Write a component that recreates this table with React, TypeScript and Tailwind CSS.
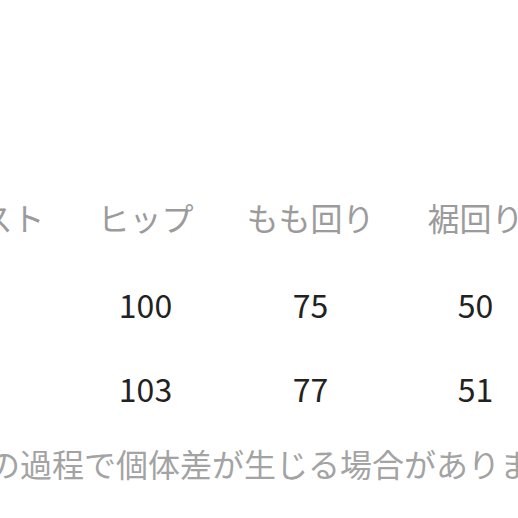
const headers = ["ウエスト", "ヒップ", "もも回り", "裾回り"];

const rows = [
  ["", "100", "75", "50"],
  ["", "103", "77", "51"],
];

export default function App() {
  return (
    <div
      className="w-[518px] h-[518px] overflow-hidden bg-white"
      style={{ fontFamily: '"Noto Sans CJK JP", "Noto Sans", sans-serif' }}
    >
      <div className="pt-[197px] ml-[-102px] flex flex-col">
        <div className="flex h-10 items-center text-[32px] text-[#9b9b9b]">
          {headers.map((h) => (
            <div key={h} className="w-[165px] shrink-0 text-center whitespace-nowrap">
              {h}
            </div>
          ))}
        </div>

        {rows.map((r, i) => (
          <div
            key={i}
            className={`flex h-10 items-center text-[32px] text-[#222] ${i === 0 ? "mt-[47px]" : "mt-[44px]"}`}
          >
            {r.map((v, j) => (
              <div key={j} className="w-[165px] shrink-0 text-center">
                {v}
              </div>
            ))}
          </div>
        ))}
      </div>

      <div className="mt-[35px] ml-[-12px] h-10 flex items-center whitespace-nowrap text-[32px] text-[#a3a3a3]">
        の過程で個体差が生じる場合があります。
      </div>
    </div>
  );
}
